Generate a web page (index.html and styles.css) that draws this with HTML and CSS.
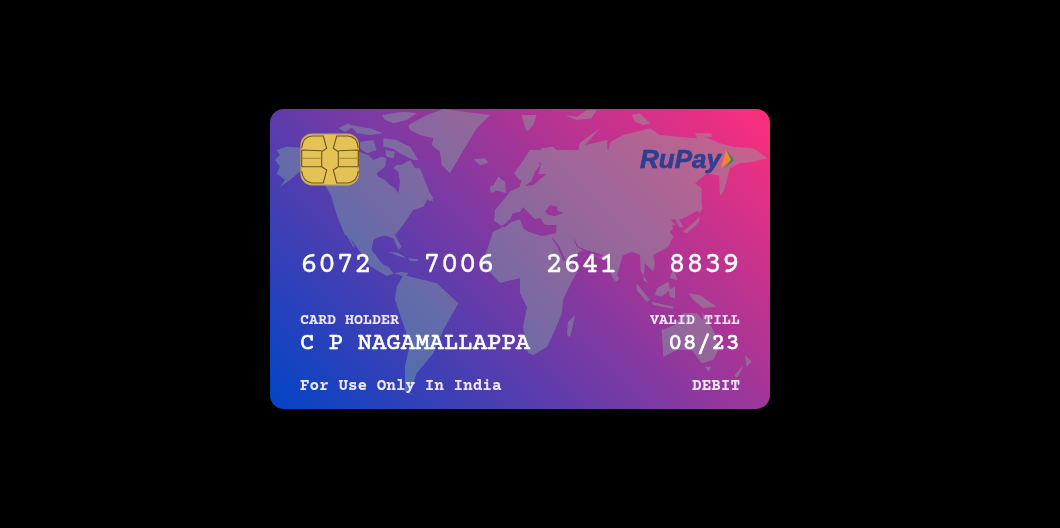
FILE: index.html
```html
<!DOCTYPE html>
<html lang="en">
<head>
  <meta charset="UTF-8">
  <meta name="viewport" content="width=device-width, initial-scale=1.0">
  <title>Debit Card</title>
  <link rel="stylesheet" href="styles.css">
</head>
<body>
  <div class="card">
    <!-- world map behind the card text -->
    <svg class="map" viewBox="270 109 500 300" aria-hidden="true">
      <defs>
        <mask id="seas" maskUnits="userSpaceOnUse" x="270" y="109" width="500" height="300">
          <rect x="270" y="109" width="500" height="300" fill="#fff"/>
          <!-- seas, cut out of the land -->
          <g fill="#000" transform="translate(470 150) scale(.3333)">
            <polygon points="72,232 100,226 122,205 128,190 150,185 160,172 195,208 210,203 225,225 260,225 258,250 215,258 175,245 160,235 150,208 125,215 105,232"/>
            <polygon points="225,185 240,165 262,170 262,182 280,188 255,198 235,195"/>
            <polygon points="205,35 215,40 195,65 185,92 165,108 190,105 228,72 205,72 212,50"/>
            <polygon points="245,265 262,290 280,332 288,332 268,290 250,265"/>
            <polygon points="310,262 325,290 350,300 400,315 390,322 345,305 320,290"/>
          </g>
        </mask>
      </defs>
      <g mask="url(#seas)">
        <!-- north america, arctic, greenland -->
        <g transform="translate(270 105) scale(.3333)">
          <polygon points="20,135 50,125 95,128 95,195 60,225 30,245 45,225 20,205 30,185 15,165 30,150"/>
          <polygon points="95,150 267,140 295,150 310,165 335,155 350,160 345,185 320,205 325,215 345,225 360,240 375,250 385,265 390,230 385,200 370,190 380,180 395,180 420,165 435,190 450,190 470,240 490,290 470,280 445,285 420,310 420,330 395,355 370,385 330,395 225,390 200,330 185,275 165,240 95,195"/>
          <polygon points="340,100 380,105 420,125 445,165 430,165 400,150 365,130 340,125"/>
          <polygon points="270,110 310,105 320,135 290,145 270,130"/>
          <polygon points="335,30 400,20 440,25 410,45 370,55 345,45"/>
          <polygon points="240,60 300,70 340,85 300,90 260,85"/>
          <polygon points="205,70 235,55 250,65 225,80"/>
          <polygon points="345,135 375,140 370,160 350,155"/>
          <polygon points="480,265 490,280 478,288 470,275"/>
          <polygon points="415,60 470,30 520,12 660,30 620,70 590,120 560,170 540,205 515,180 510,140 485,120 490,100 450,90 420,75"/>
        </g>
        <!-- central america, caribbean -->
        <g transform="translate(330 190) scale(.3333)">
          <polygon points="0,0 300,15 280,50 250,60 215,110 195,135 215,170 205,180 190,145 160,135 130,150 125,180 160,225 175,230 190,250 215,245 235,250 225,262 195,250 170,258 120,228 90,185 65,150 40,120 10,40"/>
          <polygon points="50,125 75,172 70,172 46,130"/>
          <polygon points="175,185 205,188 230,205 205,198"/>
          <polygon points="235,205 265,208 262,214 238,212"/>
        </g>
        <!-- south america -->
        <g transform="translate(270 250) scale(.3333)">
          <polygon points="400,75 500,100 565,160 520,240 490,310 440,370 420,430 440,440 405,425 405,350 420,280 375,150 380,110"/>
        </g>
        <!-- europe, middle east -->
        <g transform="translate(470 150) scale(.3333)">
          <polygon points="10,28 45,25 55,38 30,46"/>
          <polygon points="62,122 85,80 105,95 108,130 85,122"/>
          <polygon points="60,110 75,105 75,125 62,128"/>
          <polygon points="180,0 150,45 132,70 150,92 165,75 180,55 205,30 230,0"/>
          <polygon points="450,0 230,0 205,30 228,72 190,105 165,110 150,110 120,125 100,150 75,180 72,212 100,232 150,262 245,265 285,332 340,300 400,330 450,330"/>
        </g>
        <!-- africa -->
        <polygon points="493,232 505,226 522,228 540,232 552,238 562,252 575,268 577,272 570,285 563,300 562,313 555,330 547,347 533,355 528,353 523,327 527,307 520,293 520,278 500,283 490,272 483,260 487,250"/>
        <polygon points="575,315 573,325 570,337 567,335 568,322"/>
        <!-- north asia -->
        <g transform="translate(520 105) scale(.3333)">
          <polygon points="0,240 10,205 40,165 65,130 100,125 125,150 145,150 175,140 178,115 240,70 195,120 240,110 262,105 262,150 272,110 310,90 390,70 420,90 530,100 530,85 600,115 640,125 700,130 742,160 700,170 660,175 630,190 612,258 600,272 598,212 562,205 525,235 545,250 545,310 500,335 475,345 445,340 460,370 440,390 440,415 0,415"/>
          <polygon points="5,30 50,30 40,60 20,80 10,50"/>
          <polygon points="135,30 170,35 200,15 230,15 215,40 170,45"/>
          <polygon points="335,30 360,25 390,55 370,60 345,50"/>
          <polygon points="525,85 575,85 575,95 530,95"/>
        </g>
        <!-- india -->
        <polygon points="595,235 622,235 622,258 618,272 615,282 610,272 604,255 598,250"/>
        <!-- east asia, indonesia -->
        <g transform="translate(620 200) scale(.3333)">
          <polygon points="0,0 145,0 160,60 150,55 165,75 140,80 160,110 145,140 120,155 100,165 105,190 100,215 75,190 60,165 35,155 0,170"/>
          <polygon points="60,165 75,190 70,240 85,250 62,212"/>
          <polygon points="165,55 180,62 190,80 178,82"/>
          <polygon points="190,95 240,50 235,70 200,100"/>
          <polygon points="225,20 240,0 248,25 238,40"/>
          <polygon points="50,250 90,300 80,305 50,270"/>
          <polygon points="110,265 145,245 150,270 125,290 105,285"/>
          <polygon points="95,305 160,320 158,326 100,315"/>
          <polygon points="160,200 172,240 150,235"/>
          <polygon points="145,270 165,260 165,295 150,290"/>
          <polygon points="205,280 240,285 290,320 250,325 220,300"/>
        </g>
        <!-- australia, new zealand, sri lanka -->
        <g transform="translate(520 250) scale(.3333)">
          <polygon points="425,240 465,225 490,190 530,190 550,210 545,185 580,240 600,290 580,330 545,340 515,300 470,300 430,320"/>
          <polygon points="555,350 575,350 565,365"/>
          <polygon points="675,315 695,335 680,350"/>
          <polygon points="670,345 660,370 648,385 645,375"/>
          <polygon points="285,70 298,85 290,95 280,85"/>
        </g>
      </g>
    </svg>

    <div class="card-top">
      <svg class="chip" viewBox="0 0 60 53" aria-hidden="true">
        <rect x="1.2" y="1.2" width="57" height="50.5" rx="11" fill="#e5c255" stroke="#c5ab5d" stroke-width="1.6"/>
        <g id="pads" fill="none" stroke="#6b5424" stroke-width="1.1">
          <path d="M1.7 15 Q3 3.5 12 3 L23.3 3 L26.7 15.3 L21.7 18.7 L21.7 33.7 L26.7 37 L23.3 50 L12 50 Q3 49 1.7 38"/>
          <path d="M1.7 17 L21.7 17.8 M1.7 33.7 L21.7 33.7 M1.7 17 L1.7 33.7"/>
          <path d="M3 25.3 L21.7 25.3" stroke="#a88c3c"/>
        </g>
        <use href="#pads" transform="matrix(-1 0 0 1 60 0)"/>
      </svg>
      <div class="rupay">
        <span class="rupay-text">RuPay</span>
        <svg class="rupay-mark" viewBox="0 0 14 22" aria-hidden="true">
          <polygon points="0,19 5,1 10,11" fill="#f5862a"/>
          <polygon points="6,1 13,11 3,20 10,11" fill="#2a8a50"/>
        </svg>
      </div>
    </div>

    <div class="card-number">
      <span>6072</span>
      <span>7006</span>
      <span>2641</span>
      <span>8839</span>
    </div>

    <div class="card-info">
      <div>
        <div class="label">CARD HOLDER</div>
        <div class="value">C P NAGAMALLAPPA</div>
      </div>
      <div class="right">
        <div class="label">VALID TILL</div>
        <div class="value">08/23</div>
      </div>
    </div>

    <div class="card-foot">
      <span>For Use Only In India</span>
      <span>DEBIT</span>
    </div>
  </div>
</body>
</html>
```

FILE: styles.css
```css
body {
  margin: 0;
  height: 528px;
  background-color: #000;
  font-family: 'Courier Prime', 'Liberation Mono', monospace;
  color: #fff;
  display: flex;
  justify-content: center;
  align-items: center;
  padding: 0 20px 10px 0;
  box-sizing: border-box;
  overflow: hidden;
}
.card {
  position: relative;
  width: 500px;
  height: 300px;
  box-sizing: border-box;
  padding: 24px 30px 0 30px;
  border-radius: 14px;
  overflow: hidden;
  background: linear-gradient(45deg, #0045c7, #ff2d7d);
}
.map {
  position: absolute;
  left: 0;
  top: 0;
  width: 500px;
  height: 300px;
  fill: rgb(133, 188, 160);
  opacity: 0.37;
  filter: blur(0.5px);
}
.card-top,
.card-number,
.card-info,
.card-foot {
  position: relative;
  display: flex;
  justify-content: space-between;
}
.card-top {
  height: 53px;
  align-items: center;
}
.chip {
  width: 60px;
  height: 53px;
}
.rupay {
  display: flex;
  align-items: center;
  margin-right: 5px;
}
.rupay-text {
  font-family: 'Liberation Sans', sans-serif;
  font-weight: bold;
  font-style: italic;
  font-size: 26px;
  color: #2e3f91;
  -webkit-text-stroke: 0.7px #2e3f91;
}
.rupay-mark {
  width: 14px;
  height: 22px;
}
.card-number {
  margin-top: 63px;
  font-size: 30px;
  line-height: 34px;
  -webkit-text-stroke: 0.3px #fff;
}
.card-info {
  margin-top: 28px;
  align-items: flex-start;
}
.right {
  text-align: right;
}
.label {
  font-size: 15px;
  font-weight: bold;
  line-height: 19px;
  color: #f0e6f5;
}
.value {
  font-size: 24px;
  line-height: 27px;
  -webkit-text-stroke: 0.6px #fff;
}
.card-foot {
  margin-top: 20px;
  font-size: 16px;
  font-weight: bold;
  line-height: 18px;
  color: #f0e6f5;
}
```
